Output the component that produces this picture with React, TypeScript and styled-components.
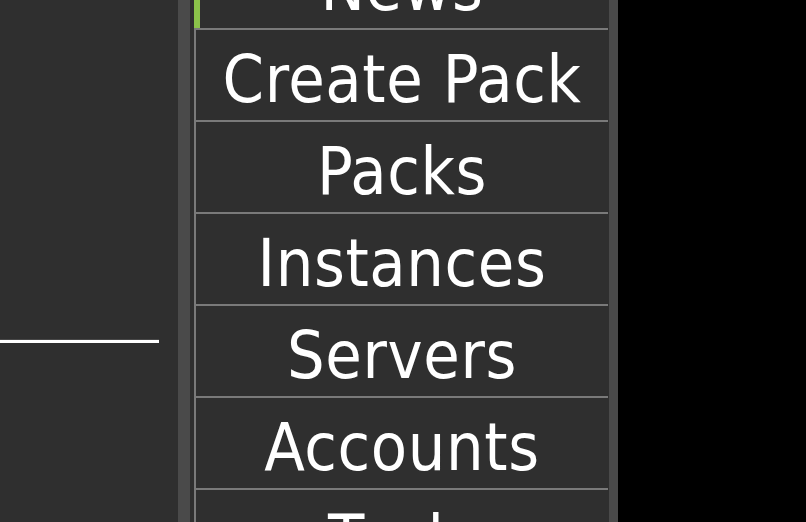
import React from 'react';
import styled, { createGlobalStyle } from 'styled-components';

const items = ['News', 'Create Pack', 'Packs', 'Instances', 'Servers', 'Accounts', 'Tools'];

export default function App(): JSX.Element {
  return (
    <>
      <GlobalStyle />
      <Page>
        <LeftPanel>
          <Divider />
        </LeftPanel>
        <Scrollbar />
        <Gutter />
        <MenuList>
          {items.map((item, i) => (
            <MenuItem key={item} $active={i === 0}>
              {item}
            </MenuItem>
          ))}
        </MenuList>
        <Gutter $width={1} />
        <Scrollbar $width={9} />
        <Outside />
      </Page>
    </>
  );
}

const GlobalStyle = createGlobalStyle`
  html, body {
    margin: 0;
    padding: 0;
    background: #000;
  }
`;

const Page = styled.div`
  display: flex;
  width: 806px;
  height: 522px;
  overflow: hidden;
  background: #000;
`;

const LeftPanel = styled.div`
  width: 178px;
  flex-shrink: 0;
  background: #2f2f2f;
  padding-top: 339px;
  box-sizing: border-box;
`;

const Divider = styled.div`
  width: 159px;
  height: 3px;
  background: #fff;
  border-top: 1px solid #474747;
`;

const Scrollbar = styled.div<{ $width?: number }>`
  width: ${(props) => props.$width ?? 12}px;
  flex-shrink: 0;
  background: #4a4a4a;
`;

const Gutter = styled.div<{ $width?: number }>`
  width: ${(props) => props.$width ?? 4}px;
  flex-shrink: 0;
  background: #2f2f2f;
`;

const MenuList = styled.div`
  width: 414px;
  flex-shrink: 0;
  background: #2f2f2f;
  margin-top: -62px;
  display: flex;
  flex-direction: column;
`;

const MenuItem = styled.div<{ $active: boolean }>`
  position: relative;
  height: 80px;
  flex-shrink: 0;
  box-sizing: content-box;
  border-left: 2px solid #7a7a7a;
  border-bottom: 2px solid #7a7a7a;
  padding-top: 10px;
  display: flex;
  align-items: center;
  justify-content: center;
  color: #fff;
  font-family: 'DejaVu Sans Condensed', 'DejaVu Sans', sans-serif;
  font-stretch: condensed;
  font-size: 66px;
  line-height: 1;
  letter-spacing: 0.6px;

  &::before {
    content: '';
    display: ${(props) => (props.$active ? 'block' : 'none')};
    position: absolute;
    left: -2px;
    top: 0;
    bottom: 0;
    width: 6px;
    background: #8bc34a;
  }
`;

const Outside = styled.div`
  flex: 1;
  background: #000;
`;
